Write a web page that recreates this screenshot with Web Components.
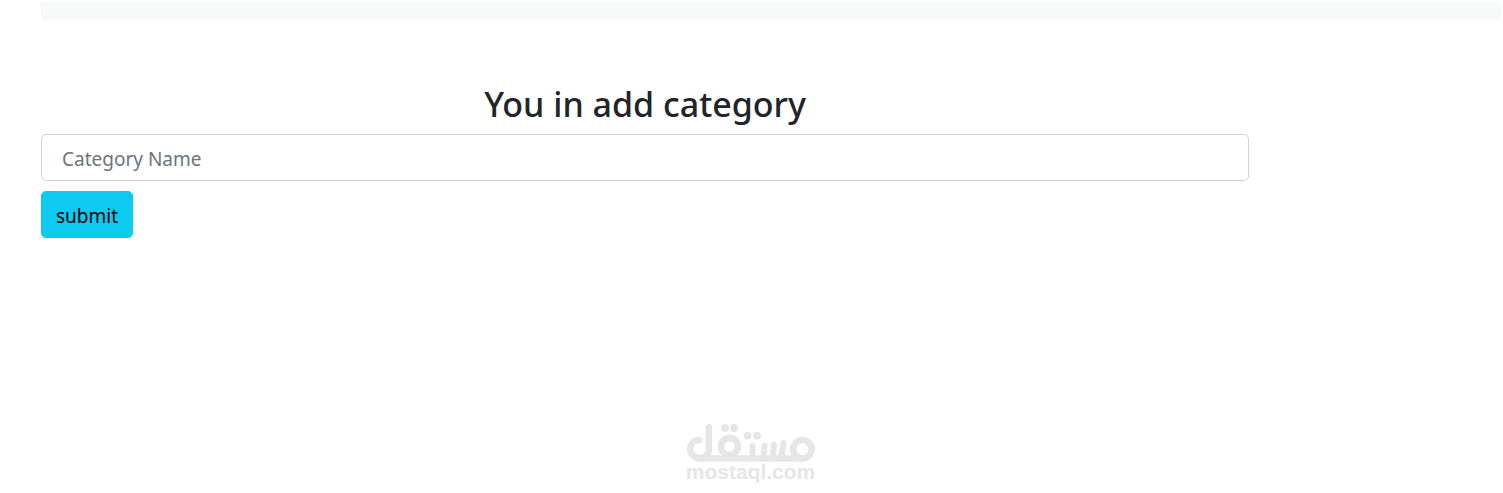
<!DOCTYPE html>
<html lang="en">
<head>
<meta charset="utf-8">
<title>Add category</title>
<style>
body { margin: 0; background: #fff; color: #212529; font-family: "Segoe UI", "Noto Sans", "Open Sans", sans-serif; font-size: 19px; line-height: 30px; }
</style>
</head>
<body>
<category-page>
  <top-bar slot="header"></top-bar>
  <category-form heading="You in add category">submit</category-form>
  <site-mark slot="footer">mostaql.com</site-mark>
</category-page>
<script>
const define = (name, html, setup) => customElements.define(name, class extends HTMLElement {
  connectedCallback() {
    if (this.shadowRoot) return;
    const template = document.createElement('template');
    template.innerHTML = html;
    this.attachShadow({ mode: 'open' }).append(template.content.cloneNode(true));
    if (setup) setup(this);
  }
});

define('category-page', `
  <style>
    :host { display: flex; flex-direction: column; box-sizing: border-box; min-height: 100vh; padding: 2px 2px 11px 41px; }
    main { flex: 1; margin-right: 252px; padding-top: 63px; }
  </style>
  <slot name="header"></slot>
  <main><slot></slot></main>
  <slot name="footer"></slot>`);

define('top-bar', `
  <style>
    :host { display: block; height: 18px; background: #f8f9fb; }
  </style>`);

define('category-form', `
  <style>
    :host { display: block; }
    h1 { margin: 0 0 9px; font-size: 34px; line-height: 42px; font-weight: 500; text-align: center; }
    form { display: flex; flex-direction: column; align-items: flex-start; gap: 10px; }
    input, button { box-sizing: border-box; height: 47px; font: inherit; border-radius: 5px; }
    input { width: 100%; padding: 9px 20px 7px; border: 1px solid #ced4da; background: #fff; color: #212529; }
    input::placeholder { color: #6c757d; opacity: 1; }
    button { padding: 9px 14px 7px; border: 1px solid #0dcaf0; background: #0dcaf0; color: #000; }
  </style>
  <h1></h1>
  <form>
    <input type="text" placeholder="Category Name" aria-label="Category Name">
    <button type="button"><slot></slot></button>
  </form>`, el => {
    el.shadowRoot.querySelector('h1').textContent = el.getAttribute('heading');
  });

define('site-mark', `
  <style>
    :host { display: flex; flex-direction: column; align-items: center; margin-right: 41px; color: #e6e6e6; font: bold 21px/20px "Liberation Sans", Arial, sans-serif; }
    svg { display: block; width: 128px; height: 38px; }
  </style>
  <svg viewBox="17 9 128 38" aria-hidden="true" fill="none" stroke="currentColor" stroke-width="6.5" stroke-linecap="round" stroke-linejoin="round">
    <path d="M29 25C23.500 25 20.300 29 20.300 34a9.300 9.300 0 0 0 18.600 0V12.300"/>
    <path d="M30 43.500H133"/>
    <circle cx="59.500" cy="31.500" r="8.500"/>
    <path d="M82.500 31v10M94.500 31l-1 11M104 29.500l-1 12M113.500 28l-2 13" stroke-width="6"/>
    <circle cx="132.500" cy="34.300" r="9.200"/>
    <g fill="currentColor" stroke="none">
      <circle cx="55" cy="13" r="3.900"/><circle cx="64" cy="13" r="3.900"/>
      <circle cx="77.500" cy="20.700" r="3.900"/><circle cx="87" cy="20.700" r="3.900"/>
    </g>
  </svg>
  <span><slot></slot></span>`);
</script>
</body>
</html>
